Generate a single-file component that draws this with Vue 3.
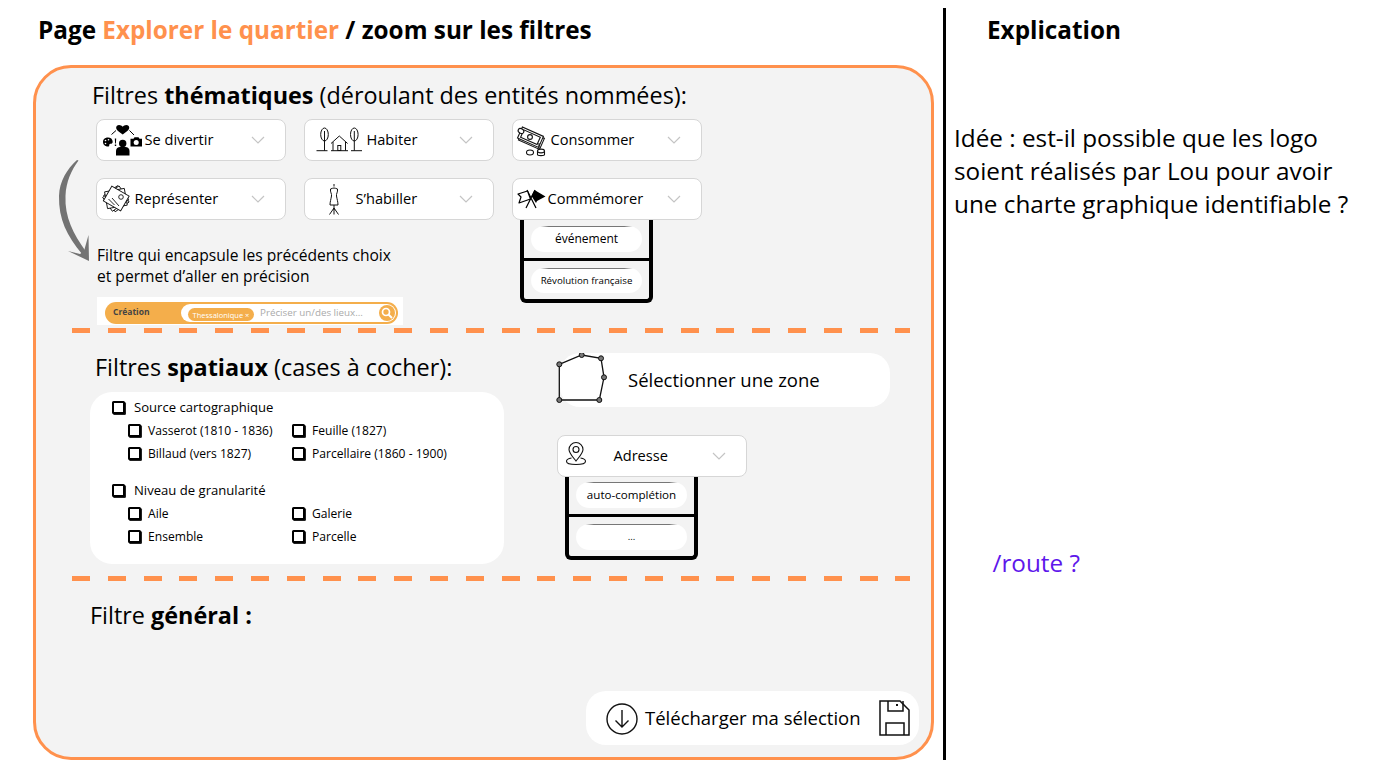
<script setup>
const sourceRows = ['Vasserot (1810 - 1836)', 'Feuille (1827)', 'Billaud (vers 1827)', 'Parcellaire (1860 - 1900)']
const levelRows = ['Aile', 'Galerie', 'Ensemble', 'Parcelle']
</script>

<template>
  <div class="page">
    <svg class="defs" width="0" height="0" aria-hidden="true">
      <symbol id="chev" viewBox="0 0 14 8"><path d="M1 1l6 6 6-6" fill="none" stroke="#c4c4c4" stroke-width="1.2" /></symbol>
    </svg>

    <main class="left">
      <h1 class="title">Page <span class="accent">Explorer le quartier</span> / zoom sur les filtres</h1>

      <div class="panel">
        <section class="thematic">
          <h2 class="heading h-them">Filtres <b>thématiques</b> (déroulant des entités nommées):</h2>

          <div class="drops">
            <div class="drop">
              <svg class="ic w44" viewBox="100 121 44 38">
                <path d="M122.7 134.5c-6-4-7.5-6-6-8.500 1.500-1.800 4.500-1.300 6 .8 1.500-2.100 4.500-2.600 6-.8 1.500 2.500 0 4.500-6 8.500z" />
                <circle cx="122.7" cy="143.500" r="3.700" />
                <path d="M116 155.500v-4.500c0-2.500 2-4 4-4h5.500c2 0 4 1.500 4 4v4.500z" />
                <path d="M111.500 134.500l4.500-4M129.500 130.500l4.500 4.500" fill="none" stroke="#000" stroke-width="1" />
                <path d="M108 137.500c-3.500 0-5 2.200-5 4.500s1.800 4.500 5 4.500c2 0 .8-1.500 1.500-2.300.8-.8 3.200 0 3.200-2.500 0-2.700-2.200-4.200-4.700-4.200z" />
                <circle cx="105.500" cy="140.500" r=".8" fill="#fff" /><circle cx="108.500" cy="139.800" r=".8" fill="#fff" /><circle cx="105.500" cy="143.500" r=".8" fill="#fff" />
                <path d="M114.800 138.500h1.400l-.3 5h-.8zM114.800 144.500h1.400v1.400h-1.400z" />
                <path d="M130.500 138.800h3l1-1.500h4l1 1.500h2.500v7.700h-11.500z" />
                <circle cx="136.200" cy="142.500" r="2.500" fill="#fff" />
              </svg>
              <span class="lbl">Se divertir</span>
              <svg class="chev"><use href="#chev" /></svg>
            </div>

            <div class="drop">
              <svg class="ic w58" viewBox="308 121 58 38">
                <g fill="none" stroke="#111" stroke-width="1">
                  <path d="M316.500 150.700h11M351 150.700h11M331 150.700h17" />
                  <ellipse cx="324.500" cy="134.500" rx="3.800" ry="6.500" />
                  <ellipse cx="354.300" cy="134.500" rx="3.800" ry="6.500" />
                  <path d="M324.500 131v19.700M354.300 131v19.700" />
                  <path d="M331 143.500l8.300-7.500 8.300 7.500M333 142v8.700M345.500 142v8.700" />
                  <rect x="337.800" y="145.500" width="3" height="5" />
                </g>
              </svg>
              <span class="lbl">Habiter</span>
              <svg class="chev"><use href="#chev" /></svg>
            </div>

            <div class="drop">
              <svg class="ic w34" viewBox="516 121 34 38">
                <g fill="#fff" stroke="#111" stroke-width="1.100">
                  <rect x="520" y="133" width="23" height="12" transform="rotate(24 531 139)" />
                  <rect x="519" y="131" width="23" height="12" transform="rotate(24 530 137)" />
                  <rect x="521.500" y="133" width="18" height="8" transform="rotate(24 530 137)" />
                  <circle cx="530" cy="137" r="2.400" />
                  <ellipse cx="521" cy="131" rx="3" ry="2.300" transform="rotate(30 521 131)" />
                  <path d="M539 143v6" />
                  <ellipse cx="530" cy="152.500" rx="3.500" ry="2.500" />
                  <path d="M537.500 151v3.500c0 1.500 7 1.500 7 0v-3.500" />
                  <ellipse cx="541" cy="151" rx="3.500" ry="1.900" />
                </g>
              </svg>
              <span class="lbl">Consommer</span>
              <svg class="chev"><use href="#chev" /></svg>
            </div>

            <div class="drop">
              <svg class="ic w34b" viewBox="100 180 34 38">
                <g fill="#fff" stroke="#111" stroke-width=".9">
                  <rect x="106" y="190" width="20" height="17" transform="rotate(55 116 199)" />
                  <rect x="106" y="190" width="20" height="17" transform="rotate(-35 116 199)" />
                  <rect x="106" y="190" width="20" height="17" transform="rotate(-10 116 199)" />
                  <rect x="106" y="190" width="20" height="17" transform="rotate(30 116 199)" />
                  <path d="M108.500 199l6 6M112 198l7 8" fill="none" />
                  <circle cx="121" cy="197" r="2.300" />
                </g>
              </svg>
              <span class="lbl">Représenter</span>
              <svg class="chev"><use href="#chev" /></svg>
            </div>

            <div class="drop">
              <svg class="ic w47" viewBox="308 180 47 38">
                <g fill="none" stroke="#111" stroke-width="1">
                  <path d="M334 184v2.500" />
                  <path d="M330.500 189c1.500-.5 2.500-1 3.500-1s2 .5 3.500 1c.5 3-1.500 5-1 7 .5 3 1.500 6 1.500 9h-8c0-3 1-6 1.500-9 .5-2-1.500-4-1-7z" />
                  <path d="M334 205v5M334 208l-4.500 6.500M334 208l4.500 6.500M334 208v6.500" />
                </g>
              </svg>
              <span class="lbl">S’habiller</span>
              <svg class="chev"><use href="#chev" /></svg>
            </div>

            <div class="cell">
              <div class="drop top">
                <svg class="ic w31" viewBox="516 180 31 38">
                  <path d="M527 190l9 18M535 190l-9 18" fill="none" stroke="#000" stroke-width="1.200" />
                  <path d="M527.500 191l-9.500 3 3 3-2 6 11.500-4z" fill="#fff" stroke="#000" stroke-width="1.200" stroke-linejoin="round" />
                  <path d="M534.500 190l11 6.500-8.500 4.500-1 2-4.500-7z" fill="#000" />
                </svg>
                <span class="lbl">Commémorer</span>
                <svg class="chev"><use href="#chev" /></svg>
              </div>
              <div class="menu">
                <div class="menu-row"><span class="chip">événement</span></div>
                <div class="menu-row"><span class="chip small">Révolution française</span></div>
              </div>
            </div>
          </div>

          <p class="note">Filtre qui encapsule les précédents choix<br />et permet d’aller en précision</p>

          <div class="search-shot">
            <div class="search">
              <span class="search-label">Création</span>
              <div class="search-field">
                <span class="tag">Thessalonique ×</span>
                <span class="placeholder">Préciser un/des lieux...</span>
                <span class="search-btn">
                  <svg width="12" height="12" viewBox="0 0 12 12"><circle cx="5" cy="5" r="3.500" fill="none" stroke="#fff" stroke-width="1.700" /><path d="M7.500 7.500l3.500 3.500" stroke="#fff" stroke-width="2" /></svg>
                </span>
              </div>
            </div>
          </div>

          <svg class="curve" width="40" height="110" viewBox="55 155 40 110">
            <path d="M77 160c-10 9-17.500 21-18 36-.5 23 8 40 23 58l3.500-3c-12-17-21-34-20-55 .5-14 6-26 13-35.500z" fill="#737373" />
            <path d="M68 251l21 10-.5-26-4.500 16-4 3z" fill="#737373" />
          </svg>
        </section>

        <div class="dash"></div>

        <section class="spatial">
          <div class="spatial-left">
            <h2 class="heading h-spat">Filtres <b>spatiaux</b> (cases à cocher):</h2>
            <div class="card">
              <div class="check main"><i class="box"></i><span>Source cartographique</span></div>
              <div class="subgrid">
                <div v-for="r in sourceRows" :key="r" class="check"><i class="box"></i><span>{{ r }}</span></div>
              </div>
              <div class="check main second"><i class="box"></i><span>Niveau de granularité</span></div>
              <div class="subgrid">
                <div v-for="r in levelRows" :key="r" class="check"><i class="box"></i><span>{{ r }}</span></div>
              </div>
            </div>
          </div>

          <div class="spatial-right">
            <div class="zone">
              <svg class="zone-ic" width="56" height="54" viewBox="555 353 56 54">
                <path d="M559.300 364.300L581.700 355 601 358.300 604 377.300 599.300 400H559.300z" fill="none" stroke="#111" stroke-width="1.300" />
                <g fill="#777" stroke="#111" stroke-width="1">
                  <circle cx="559.300" cy="364.300" r="2.500" /><circle cx="581.700" cy="355" r="2.500" /><circle cx="601" cy="358.300" r="2.500" />
                  <circle cx="604" cy="377.300" r="2.500" /><circle cx="599.300" cy="400" r="2.500" /><circle cx="559.300" cy="400" r="2.500" />
                </g>
              </svg>
              <span class="zone-text">Sélectionner une zone</span>
            </div>

            <div class="cell addr">
              <div class="drop top">
                <svg class="ic w52" viewBox="561 437 52 38">
                  <g fill="none" stroke="#111" stroke-width="1.100">
                    <path d="M576 461c-4-5-7-8-7-11.500a7 7 0 0 1 14 0c0 3.500-3 6.500-7 11.500z" />
                    <circle cx="576" cy="449.500" r="3" />
                    <path d="M571.500 458c-3 .5-5 1.700-5 3.200 0 2 4.300 3.300 9.500 3.300s9.500-1.300 9.500-3.300c0-1.500-2-2.700-5-3.200" />
                  </g>
                </svg>
                <span class="lbl">Adresse</span>
                <svg class="chev"><use href="#chev" /></svg>
              </div>
              <div class="menu menu-addr">
                <div class="menu-row"><span class="chip auto">auto-complétion</span></div>
                <div class="menu-row"><span class="chip small">...</span></div>
              </div>
            </div>
          </div>
        </section>

        <div class="dash"></div>

        <section class="general">
          <h2 class="heading h-gen">Filtre <b>général :</b></h2>
          <div class="download">
            <svg width="32" height="32" viewBox="0 0 32 32">
              <circle cx="16" cy="16" r="15" fill="none" stroke="#111" stroke-width="1.400" />
              <path d="M16 7v17M9.500 17.500L16 24l6.500-6.500" fill="none" stroke="#111" stroke-width="1.400" />
            </svg>
            <span class="dl-text">Télécharger ma sélection</span>
            <svg class="save" width="32" height="37" viewBox="878 700 32 37">
              <g fill="none" stroke="#111" stroke-width="1.500">
                <path d="M880 701h20l9 9v25h-29z" />
                <path d="M888 701v10h15v-10M886 735v-12h18v12" />
              </g>
              <rect x="896" y="704" width="2" height="2" fill="#111" />
            </svg>
          </div>
        </section>
      </div>
    </main>

    <div class="divider"></div>

    <aside class="right">
      <h1 class="title expl">Explication</h1>
      <p class="idea">Idée : est-il possible que les logo<br />soient réalisés par Lou pour avoir<br />une charte graphique identifiable ?</p>
      <p class="route">/route ?</p>
    </aside>
  </div>
</template>

<style scoped>
.page {
  width: 1384px;
  height: 765px;
  display: flex;
  font-family: "Open Sans", "Noto Sans", sans-serif;
  color: #000;
  background: #fff;
  overflow: hidden;
}
.defs { position: absolute; }
.left { width: 943px; flex: none; padding: 12px 0 0 33px; box-sizing: border-box; }
.title { margin: 0 0 0 5px; font-size: 24.300px; line-height: 36px; font-weight: 700; height: 53px; white-space: nowrap; }
.accent { color: #ff914d; }
.panel {
  width: 901px;
  height: 695px;
  box-sizing: border-box;
  border: 3px solid #ff914d;
  border-radius: 38px;
  background: #f3f3f3;
  display: flex;
  flex-direction: column;
}
.heading { margin: 0; font-size: 23.400px; line-height: 33px; font-weight: 400; white-space: nowrap; }
.heading b { font-weight: 700; }

.thematic { position: relative; height: 260px; padding: 11px 0 0 56px; box-sizing: border-box; flex: none; }
.drops {
  margin: 7px 0 0 4px;
  display: grid;
  grid-template-columns: repeat(3, 190px);
  grid-auto-rows: 42px;
  column-gap: 18px;
  row-gap: 17px;
}
.cell { position: relative; width: 190px; height: 42px; }
.drop {
  height: 42px;
  box-sizing: border-box;
  background: #fff;
  border: 1.500px solid #d6d6d6;
  border-radius: 8px;
  padding: 0 20px 0 2.500px;
  display: flex;
  align-items: center;
  font-size: 14.600px;
  white-space: nowrap;
}
.lbl { position: relative; top: -1px; left: 1px; }
.drop.top { position: relative; z-index: 2; }
.ic { height: 38px; flex: none; }
.w44 { width: 44px; }
.w58 { width: 58px; }
.w34, .w34b { width: 34px; }
.w47 { width: 47px; }
.w31 { width: 31px; }
.w52 { width: 52px; }
.chev { width: 14px; height: 8px; margin-left: auto; flex: none; }

.menu {
  position: absolute;
  left: 8px;
  top: 40px;
  width: 133px;
  box-sizing: border-box;
  border: 4px solid #000;
  border-top: 0;
  border-radius: 0 0 6px 6px;
  background: #f3f3f3;
}
.menu-row { height: 40px; box-sizing: border-box; padding: 8px 7px 0; }
.menu-row + .menu-row { border-top: 3.500px solid #000; height: 41px; padding-top: 6.500px; }
.menu-addr .menu-row { height: 39px; padding-top: 7px; }
.menu-addr .menu-row + .menu-row { height: 42px; }
.chip {
  display: flex;
  align-items: center;
  justify-content: center;
  height: 25.500px;
  box-sizing: border-box;
  background: linear-gradient(90deg, transparent 8%, #777 16%, #777 84%, transparent 92%) top / 100% 1px no-repeat, #fff;
  border-radius: 14px;
  font-size: 12px;
  white-space: nowrap;
}
.chip.small { font-size: 9.700px; }
.chip.auto { font-size: 11.600px; }

.note { margin: 25px 0 0 5px; font-size: 15.600px; line-height: 21px; white-space: nowrap; }
.search-shot {
  margin: 10px 0 0 5px;
  width: 306px;
  height: 28px;
  box-sizing: border-box;
  background: #fff;
  padding: 5px 5px 1px 8px;
}
.search {
  height: 22px;
  border-radius: 11px;
  background: #f4ae4b;
  display: flex;
  align-items: center;
  padding: 0 2px 0 8px;
}
.search-label { width: 68px; flex: none; font-size: 8.500px; font-weight: 700; color: #444; position: relative; top: -2px; }
.search-field {
  flex: 1;
  height: 18px;
  border-radius: 9px;
  background: #fff;
  display: flex;
  align-items: center;
  padding: 0 1px 0 7px;
  position: relative;
}
.tag {
  height: 13px;
  margin-top: 3px;
  width: 66px;
  flex: none;
  border-radius: 7px;
  background: #f4ae4b;
  color: #fff;
  font-size: 7.500px;
  line-height: 14px;
  text-align: center;
  white-space: nowrap;
}
.placeholder { margin-left: 6px; margin-top: -2px; font-size: 9.800px; color: #aaa; white-space: nowrap; }
.search-btn {
  margin-left: auto;
  width: 16px;
  height: 16px;
  border-radius: 50%;
  background: #f4ae4b;
  display: flex;
  align-items: center;
  justify-content: center;
}
.curve { position: absolute; left: 19px; top: 87px; }

.dash {
  flex: none;
  width: 838px;
  height: 5px;
  margin-left: 36px;
  background: repeating-linear-gradient(90deg, #ff914d 0 18px, transparent 18px 35.800px);
}

.spatial { flex: none; height: 243px; box-sizing: border-box; display: flex; padding: 18px 0 0 54px; }
.spatial-left { width: 414px; flex: none; }
.h-spat { margin-left: 5px; height: 40.500px; }
.card {
  width: 414px;
  height: 172px;
  box-sizing: border-box;
  background: #fff;
  border-radius: 22px;
  padding: 4px 0 0 22px;
}
.check { display: flex; align-items: center; height: 23px; font-size: 12.100px; white-space: nowrap; }
.check .box { margin-right: 7px; }
.check.main { font-size: 13.100px; }
.check.main .box { margin-right: 9px; }
.second { margin-top: 14px; }
.box {
  width: 13px;
  height: 13px;
  box-sizing: border-box;
  flex: none;
  border: 2px solid #000;
  border-radius: 1.500px;
  background: #fff;
  box-shadow: 1px 1px 0 #222;
}
.subgrid { margin-left: 16px; display: grid; grid-template-columns: 164px 1fr; }

.spatial-right { margin: 2px 0 0 53px; width: 333px; flex: none; }
.zone {
  margin-left: 3px;
  width: 330px;
  height: 54px;
  background: #fff;
  border-radius: 20px;
  display: flex;
  align-items: center;
  font-size: 18.500px;
  white-space: nowrap;
}
.zone-text { position: relative; top: -1px; }
.zone-ic { margin-left: -5px; margin-right: 17px; flex: none; }
.addr { margin-top: 28px; }

.general { flex: 1; display: flex; flex-direction: column; padding: 18px 12px 12px 54px; }
.download {
  margin-top: auto;
  align-self: flex-end;
  width: 333px;
  height: 54px;
  box-sizing: border-box;
  background: #fff;
  border-radius: 20px;
  display: flex;
  align-items: center;
  padding: 2px 9px 0 20px;
  font-size: 18.500px;
  white-space: nowrap;
}
.dl-text { margin-left: 7px; position: relative; top: -2px; }
.save { margin-left: auto; margin-top: -1px; }

.divider { width: 3px; height: 752px; margin-top: 8px; flex: none; background: #000; }

.right { flex: 1; position: relative; padding: 12px 0 0 41px; box-sizing: border-box; }
.expl { margin-left: 0; height: 108.500px; }
.idea { margin: 0 0 0 -33px; font-size: 24.300px; line-height: 33.300px; white-space: nowrap; }
.route { margin: 325.500px 0 0 5.500px; font-size: 24.300px; line-height: 33px; color: #5e17eb; }
</style>
